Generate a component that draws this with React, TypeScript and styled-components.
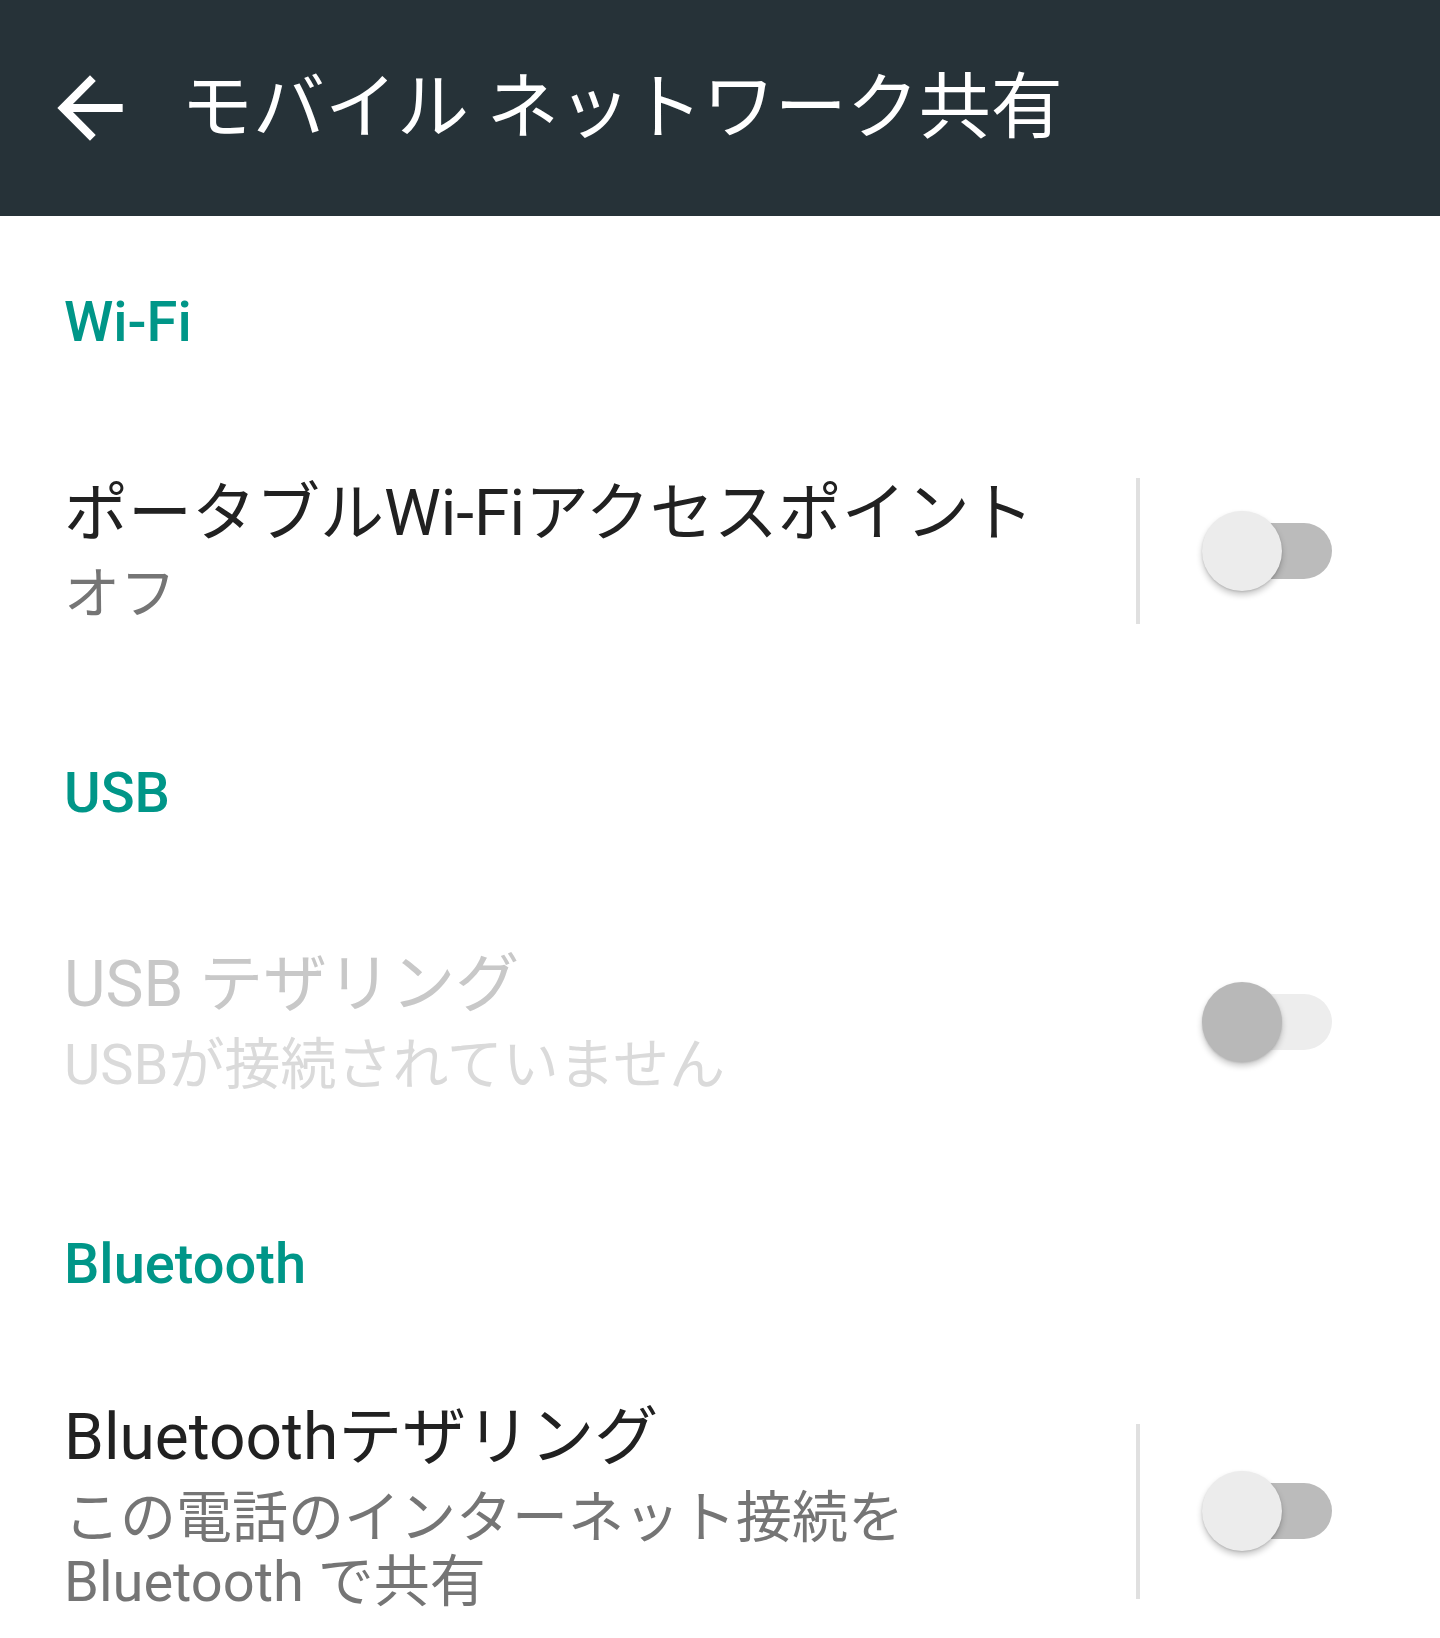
import styled, { createGlobalStyle } from "styled-components";

const GlobalStyle = createGlobalStyle`
  html, body {
    margin: 0;
    padding: 0;
    background: #ffffff;
    overflow: hidden;
  }
  body {
    font-family: "Roboto", "Noto Sans CJK JP", sans-serif;
  }
`;

const Page = styled.div`
  width: 1440px;
  min-height: 1638px;
  background: #ffffff;
`;

const AppBar = styled.header`
  height: 216px;
  background: #263238;
  display: flex;
  align-items: center;
  padding-left: 41px;
  gap: 42px;
  box-sizing: border-box;
`;

const BackButton = styled.button`
  width: 98px;
  height: 98px;
  padding: 0;
  border: none;
  background: transparent;
  display: flex;
  align-items: center;
  justify-content: center;
  cursor: pointer;
`;

const AppTitle = styled.h1`
  margin: 0;
  color: #ffffff;
  font-size: 72px;
  font-weight: 400;
  line-height: 98px;
  white-space: nowrap;
`;

const SectionTitle = styled.div`
  padding: 74px 64px 61px;
  font-size: 56px;
  font-weight: 500;
  line-height: 64px;
  color: #009688;
`;

const PrefRow = styled.div`
  display: flex;
  align-items: center;
  min-height: 272px;
  padding: 43px 108px 43px 64px;
  box-sizing: border-box;
`;

const PrefText = styled.div`
  flex: 1;
  min-width: 0;
`;

const PrefTitle = styled.div<{ $disabled?: boolean }>`
  font-size: 64px;
  line-height: 76px;
  color: ${(p) => (p.$disabled ? "#c8c8c8" : "#212121")};
  white-space: nowrap;
`;

const PrefSummary = styled.div<{ $disabled?: boolean }>`
  margin-top: 10px;
  font-size: 56px;
  line-height: 64px;
  color: ${(p) => (p.$disabled ? "#dadada" : "#757575")};
`;

const WidgetArea = styled.div<{ $shift: number }>`
  display: flex;
  align-items: center;
  margin-top: ${(p) => p.$shift}px;
  flex-shrink: 0;
`;

const Divider = styled.div<{ $height: number; $visible: boolean }>`
  width: 4px;
  height: ${(p) => p.$height}px;
  background: ${(p) => (p.$visible ? "#e0e0e0" : "transparent")};
  margin-right: 62px;
`;

const SwitchBox = styled.div`
  position: relative;
  width: 130px;
  height: 80px;
`;

const Track = styled.div<{ $disabled?: boolean }>`
  position: absolute;
  left: 12px;
  right: 0;
  top: 12px;
  height: 56px;
  border-radius: 28px;
  background: ${(p) => (p.$disabled ? "#ededed" : "#bbbbbb")};
`;

const Thumb = styled.div<{ $disabled?: boolean }>`
  position: absolute;
  left: 0;
  top: 0;
  width: 80px;
  height: 80px;
  border-radius: 50%;
  background: ${(p) => (p.$disabled ? "#b8b8b8" : "#ececec")};
  box-shadow: 0 4px 6px rgba(0, 0, 0, 0.22), 0 1px 2px rgba(0, 0, 0, 0.12);
`;

function BackArrow() {
  return (
    <svg width="98" height="98" viewBox="0 0 24 24" fill="#ffffff">
      <path d="M20 11H7.83l5.59-5.59L12 4l-8 8 8 8 1.41-1.41L7.83 13H20v-2z" />
    </svg>
  );
}

function Switch({ disabled }: { disabled?: boolean }) {
  return (
    <SwitchBox>
      <Track $disabled={disabled} />
      <Thumb $disabled={disabled} />
    </SwitchBox>
  );
}

type PrefProps = {
  title: string;
  summary: React.ReactNode;
  disabled?: boolean;
  divider?: number;
  shift?: number;
};

function Preference({ title, summary, disabled, divider, shift = 0 }: PrefProps) {
  return (
    <PrefRow>
      <PrefText>
        <PrefTitle $disabled={disabled}>{title}</PrefTitle>
        <PrefSummary $disabled={disabled}>{summary}</PrefSummary>
      </PrefText>
      <WidgetArea $shift={shift}>
        <Divider $height={divider ?? 146} $visible={divider !== undefined} />
        <Switch disabled={disabled} />
      </WidgetArea>
    </PrefRow>
  );
}

export default function App() {
  return (
    <Page>
      <GlobalStyle />
      <AppBar>
        <BackButton aria-label="戻る">
          <BackArrow />
        </BackButton>
        <AppTitle>モバイル ネットワーク共有</AppTitle>
      </AppBar>

      <SectionTitle>Wi-Fi</SectionTitle>
      <Preference title="ポータブルWi-Fiアクセスポイント" summary="オフ" divider={146} />

      <SectionTitle>USB</SectionTitle>
      <Preference title="USB テザリング" summary="USBが接続されていません" disabled />

      <SectionTitle>Bluetooth</SectionTitle>
      <Preference
        title="Bluetoothテザリング"
        summary={
          <>
            この電話のインターネット接続を
            <br />
            Bluetooth で共有
          </>
        }
        divider={175}
        shift={8}
      />
    </Page>
  );
}
